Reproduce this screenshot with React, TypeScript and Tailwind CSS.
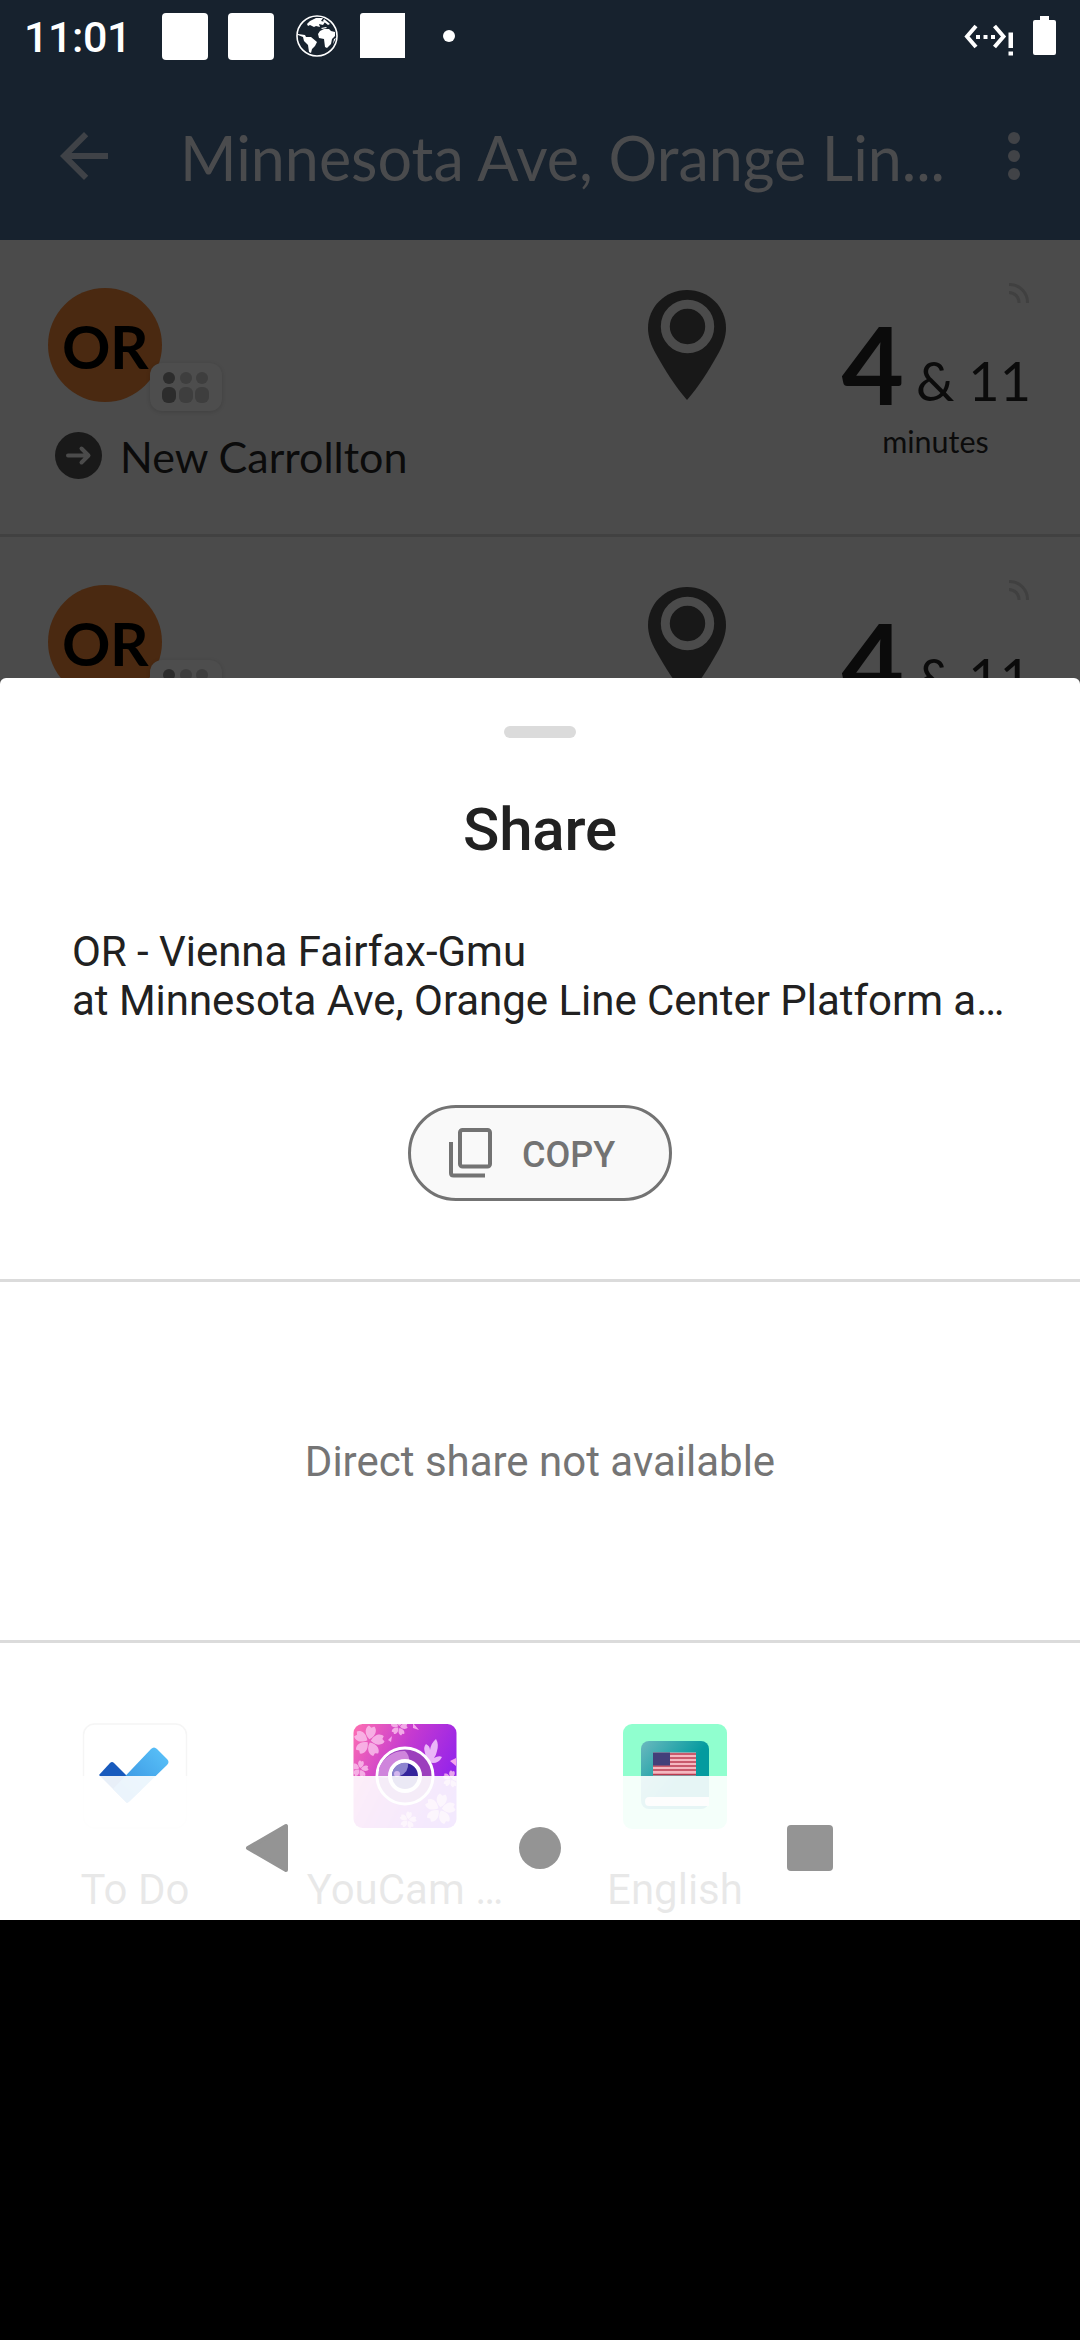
import type { ReactNode } from "react";

function StatusBar() {
  return (
    <div className="flex h-[72px] items-start text-white">
      <div className="ml-6 mt-[12px] w-[104px] whitespace-nowrap text-[43px] leading-[50px] font-medium tracking-[-0.4px]">11:01</div>
      <div className="ml-[34px] mt-[13px] h-[47px] w-[46px] rounded-[4px] bg-white" />
      <div className="ml-[20px] mt-[13px] h-[47px] w-[46px] rounded-[4px] bg-white" />
      <svg className="ml-[22px] mt-[15px] h-[42px] w-[42px]" viewBox="0 0 42 42">
        <circle cx="21" cy="21" r="20" fill="none" stroke="white" strokeWidth="1.600" />
        <path fill="white" d="M11 9l3-3 6-3 7 0-2 3 4 1-2 3-4-1 1 3-4-1-2 1-4-2-2 1zM28 4l6 5-2 1-5-4zM2 19l7 1 1 2 5 0 6 5-2 4-3 3-1 4-2-1-1-7-4-4-1-4-5-2zM24 16l4-2 5 0 2 2 4 1 0 4-3 3-1 5-4 4-2-1-1-8-5-1-1-4zM25 13l5-1 1 1-5 1zM38 24l2-1-3 6z" />
      </svg>
      <div className="ml-[22px] mt-[13px] h-[45px] w-[45px] rounded-tl-[3px] bg-white" />
      <div className="ml-[38px] mt-[30px] size-3 rounded-full bg-white" />
      <svg className="ml-auto mt-[22px] h-[34px] w-[50px]" viewBox="0 0 50 34">
        <path d="M13 4L4 14.500l9 10.500M31.500 4l9 10.500-9 10.500" fill="none" stroke="white" strokeWidth="4" />
        <path d="M13 13h4v4h-4zM20.500 13h4v4h-4zM28 13h4v4h-4zM45.500 10.500h4.500v15.500h-4.500zM45.500 29.500h4.500v4h-4.500z" fill="white" />
      </svg>
      <svg className="ml-5 mr-6 mt-4 h-10 w-[23px]" viewBox="0 0 23 40">
        <path d="M7 0h9v4h5q2 0 2 2v31q0 2-2 2H2q-2 0-2-2V6q0-2 2-2h5z" fill="white" />
      </svg>
    </div>
  );
}

function AppBar() {
  return (
    <div className="flex h-[168px] items-start pt-[48px]">
      <svg className="ml-12 size-[72px]" viewBox="0 0 24 24" fill="#3f4247">
        <path d="M20 11H7.830l5.590-5.590L12 4l-8 8 8 8 1.410-1.410L7.830 13H20v-2z" />
      </svg>
      <div className="ml-[60px] w-[786px] whitespace-nowrap font-['Lato'] text-[61px] leading-[75px] text-[#4a4b4d]">Minnesota Ave, Orange Lin...</div>
      <svg className="ml-[12px] size-[72px]" viewBox="0 0 24 24" fill="#414347">
        <circle cx="12" cy="6" r="2" />
        <circle cx="12" cy="12" r="2" />
        <circle cx="12" cy="18" r="2" />
      </svg>
    </div>
  );
}

function Arrival() {
  return (
    <div className="flex h-[297px] border-b-[3px] border-[#414141] text-[#0b0b0b]">
      <div className="ml-12 w-[600px] pt-[48px]">
        <div className="relative flex size-[114px] items-center justify-center rounded-full bg-[#4a2911]">
          <span className="mt-[1px] whitespace-nowrap font-['Lato'] text-[60px] leading-[72px] font-bold tracking-[-0.5px] text-black">OR</span>
          <div className="absolute left-[102px] top-[75px] h-[48px] w-[72px] rounded-xl bg-[#4d4d4d] shadow-[0_1px_4px_rgba(0,0,0,0.14)]">
            <svg className="size-full" viewBox="0 0 72 48" fill="#3e3e3e">
              <g fill="#2c2c2c">
                <circle cx="19" cy="15" r="6" />
                <rect x="12" y="24" width="14" height="16" rx="6" />
              </g>
              <circle cx="36" cy="15" r="6" />
              <rect x="29" y="24" width="14" height="16" rx="6" />
              <circle cx="52" cy="15" r="6" />
              <rect x="45" y="24" width="14" height="16" rx="6" />
            </svg>
          </div>
        </div>
        <div className="mt-[28px] flex items-center pl-[7px]">
          <svg className="size-[47px]" viewBox="0 0 47 47">
            <circle cx="23.500" cy="23.500" r="23.500" fill="#191919" />
            <path d="M13 23.500h20M26.500 16.500l7 7-7 7" fill="none" stroke="#4b4b4b" strokeWidth="4" strokeLinecap="round" strokeLinejoin="round" />
          </svg>
          <span className="ml-[18px] mt-[3px] whitespace-nowrap font-['Lato'] text-[43px] leading-[48px]">New Carrollton</span>
        </div>
      </div>
      <svg className="mt-[50px] h-[110px] w-[78px] shrink-0" viewBox="0 0 78 110">
        <path d="M39 0C17 0 0 17 0 38c0 9 3 17 8 26 10 18 19 32 31 46 12-14 21-28 31-46 5-9 8-17 8-26C78 17 61 0 39 0z" fill="#181818" />
        <circle cx="39.500" cy="36.500" r="22.200" fill="none" stroke="#4b4b4b" strokeWidth="9" />
      </svg>
      <div className="ml-auto mr-[51px] w-[190px] pt-[43px]">
        <svg className="ml-auto h-[20px] w-[20px]" viewBox="0 0 20 20" fill="none" stroke="#404040" strokeWidth="3">
          <path d="M0 1.500A18 18 0 0 1 18.500 20M0 9.500A10 10 0 0 1 10 20" />
        </svg>
        <div className="mr-[-2px] flex h-[120px] items-baseline justify-end whitespace-nowrap">
          <span className="relative top-[2px] font-['Lato'] text-[108px] leading-[116px] font-bold">4</span>
          <span className="relative top-[-2px] ml-[12px] font-['Lato'] text-[54px]">&amp; 11</span>
        </div>
        <div className="pl-[3px] text-center font-['Lato'] text-[30.500px] leading-[36px]">minutes</div>
      </div>
    </div>
  );
}

function TodoIcon() {
  return (
    <svg className="size-[106px]" viewBox="0 0 106 106">
      <defs>
        <linearGradient id="todo" x1="0" y1="1" x2="1" y2="0">
          <stop offset="0" stopColor="#2f86da" />
          <stop offset="1" stopColor="#5bc4fa" />
        </linearGradient>
      </defs>
      <rect x="1.500" y="1" width="103" height="104" rx="11" fill="white" stroke="#f5f5f5" strokeWidth="1.500" />
      <path d="M17 52l11-12q2-2 4 0l27 27-14 13z" fill="#185abd" />
      <path d="M31 66L69 26q3-3 6 0l10 10q3 3 0 6L48 78q-3 3-5 0z" fill="url(#todo)" />
    </svg>
  );
}

function Flower({ x, y, s }: { x: number; y: number; s: number }) {
  return (
    <g transform={`translate(${x} ${y}) scale(${s})`} fill="#fbc4ee" opacity="0.8">
      {[10, 82, 154, 226, 298].map((a) => (
        <path key={a} transform={`rotate(${a})`} d="M0-2C-8-8-6-15-3-17L0-15 3-17C6-15 8-8 0-2z" />
      ))}
    </g>
  );
}

function YouCamIcon() {
  return (
    <svg className="size-[106px]" viewBox="0 0 106 106">
      <defs>
        <linearGradient id="cam" x1="0" y1="0.100" x2="1" y2="0.600">
          <stop offset="0" stopColor="#fb6db4" />
          <stop offset="0.450" stopColor="#c53ad0" />
          <stop offset="1" stopColor="#8a1ff0" />
        </linearGradient>
        <clipPath id="camClip">
          <rect x="1.500" y="1" width="103" height="104" rx="9" />
        </clipPath>
      </defs>
      <g clipPath="url(#camClip)">
        <rect width="106" height="106" fill="url(#cam)" />
        <Flower x={17} y={18} s={0.9} />
        <Flower x={8} y={46} s={0.5} />
        <Flower x={47} y={4} s={0.5} />
        <Flower x={88} y={86} s={0.9} />
        <Flower x={56} y={97} s={0.5} />
        <Flower x={99} y={56} s={0.5} />
        <path d="M61 0l6 7-6-2zM36 17l4-4-1 6zM104 35l-6 3 6 5z" fill="#f4a4ec" />
        <path d="M73 30q-2-6 1-9 4 2 4 6 1-7 6-11 3 5 1 12-1 5-3 7 5-3 8-1-3 6-9 6l-6-1z" fill="#eab6f8" />
        <circle cx="53" cy="53" r="28" fill="#9c3fbd" stroke="white" strokeWidth="3" />
        <path d="M27 45a27 27 0 0 1 26-17q5 4 4 12l-16 8-6 7-8-1z" fill="#cf85dc" />
        <circle cx="53" cy="53" r="15" fill="#34249b" stroke="white" strokeWidth="4" />
        <path d="M40 53a13 13 0 0 1 16-13q1 9-8 13z" fill="#8d84cf" />
        <circle cx="45" cy="51" r="3" fill="#d3b6ee" />
      </g>
    </svg>
  );
}

function EnglishIcon() {
  return (
    <svg className="size-[106px]" viewBox="0 0 106 106">
      <defs>
        <linearGradient id="book" x1="0" y1="0" x2="0.600" y2="0.500">
          <stop offset="0" stopColor="#6cb9bf" />
          <stop offset="1" stopColor="#049b9f" />
        </linearGradient>
      </defs>
      <rect x="1" y="1" width="104" height="105" rx="9" fill="#90ffcf" />
      <rect x="19" y="18" width="68" height="68" rx="8" fill="url(#book)" />
      <path d="M87 74H27q-4 0-4 4.500t4 4.500h60z" fill="#e8e8ec" />
      <rect x="31" y="29.500" width="43" height="23" fill="#f4b8c0" />
      <path d="M31 31h43M31 35h43M31 39h43M31 43h43M31 47h43M31 51.500h43" stroke="#bb3b50" strokeWidth="1.700" />
      <rect x="31" y="29.500" width="17" height="13" fill="#43407a" />
    </svg>
  );
}

function ShareTarget({ label, children }: { label: string; children: ReactNode }) {
  return (
    <div className="flex w-[270px] flex-col items-center">
      {children}
      <div className="mt-[36px] whitespace-nowrap text-[42px] leading-[50px] text-[#1c1c1c]">{label}</div>
    </div>
  );
}

function ShareSheet() {
  return (
    <div className="absolute inset-x-0 top-[678px] h-[1242px] overflow-hidden rounded-t-[6px] bg-white text-[#212121]">
      <div className="mx-auto mt-[48px] h-3 w-[72px] rounded-full bg-[#dbdbdb]" />
      <div className="mt-[57px] text-center text-[60px] leading-[70px] font-medium tracking-[-0.2px]">Share</div>
      <div className="mt-[62px] ml-[72px] whitespace-nowrap text-[42px] leading-[49px] tracking-[-0.03px]">
        <div>OR - Vienna Fairfax-Gmu</div>
        <div>at Minnesota Ave, Orange Line Center Platform a…</div>
      </div>
      <div className="mx-auto mt-[80px] flex h-[96px] w-[264px] items-center rounded-full border-[3px] border-[#737373] bg-[#f9f9f9] text-[#737373]">
        <svg className="ml-[38px] h-[50px] w-[43px]" viewBox="0 0 43 50" fill="none" stroke="currentColor" strokeWidth="4">
          <rect x="11" y="2" width="30" height="36.500" rx="2.500" />
          <path d="M2 14v31q0 2.500 2.500 2.500H36" />
        </svg>
        <span className="ml-[30px] mt-[3px] text-[36px] leading-[42px] font-medium">COPY</span>
      </div>
      <div className="mt-[78px] flex h-[364px] items-center justify-center border-y-[3px] border-[#dbdbdb] text-[42px] text-[#757575]">Direct share not available</div>
      <div className="mt-[80px] flex">
        <ShareTarget label="To Do"><TodoIcon /></ShareTarget>
        <ShareTarget label="YouCam …"><YouCamIcon /></ShareTarget>
        <ShareTarget label="English"><EnglishIcon /></ShareTarget>
      </div>
      <div className="absolute inset-x-0 bottom-0 flex h-[144px] items-center bg-white/90">
        <svg className="ml-[245px] h-[50px] w-[44px]" viewBox="0 0 44 50">
          <path d="M3 25L41 3v44z" fill="#949494" stroke="#949494" strokeWidth="4" strokeLinejoin="round" />
        </svg>
        <div className="ml-[230px] size-[42px] rounded-full bg-[#949494]" />
        <div className="ml-[226px] size-[46px] rounded-[4px] bg-[#949494]" />
      </div>
    </div>
  );
}

export default function App() {
  return (
    <div className="relative h-[2340px] w-[1080px] overflow-hidden bg-black font-['Roboto',sans-serif]">
      <div className="h-[240px] bg-[#17222e]">
        <StatusBar />
        <AppBar />
      </div>
      <div className="h-[600px] bg-[#4b4b4b]">
        <Arrival />
        <Arrival />
      </div>
      <ShareSheet />
    </div>
  );
}
